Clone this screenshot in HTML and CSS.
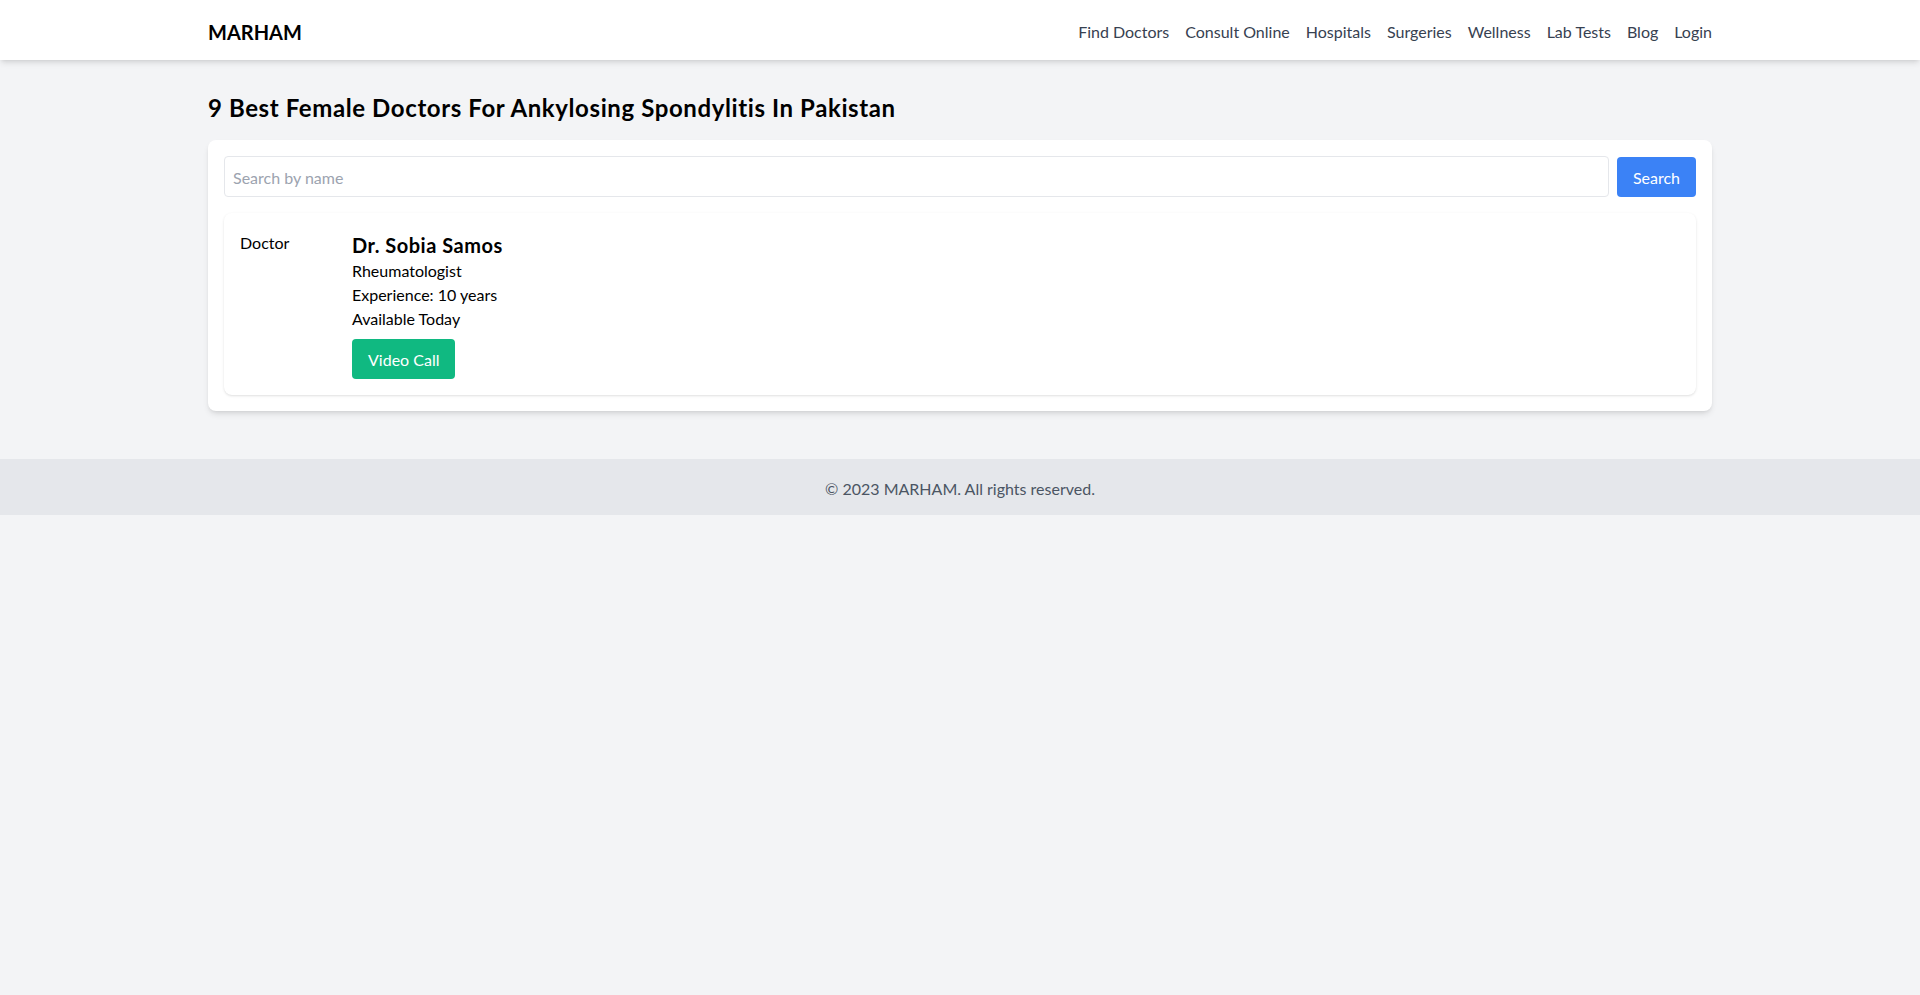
FILE: index.html
```html
<!DOCTYPE html>
<html lang="en">
<head>
<meta charset="utf-8">
<title>MARHAM</title>
<link rel="stylesheet" href="styles.css">
</head>
<body>
<header class="header">
  <div class="container header-inner">
    <a class="logo" href="#">MARHAM</a>
    <nav class="nav">
      <a href="#">Find Doctors</a>
      <a href="#">Consult Online</a>
      <a href="#">Hospitals</a>
      <a href="#">Surgeries</a>
      <a href="#">Wellness</a>
      <a href="#">Lab Tests</a>
      <a href="#">Blog</a>
      <a href="#">Login</a>
    </nav>
  </div>
</header>
<main class="container main">
  <h1 class="title">9 Best Female Doctors For Ankylosing Spondylitis In Pakistan</h1>
  <section class="panel">
    <div class="search-row">
      <input class="search-input" type="text" placeholder="Search by name">
      <button class="search-btn">Search</button>
    </div>
    <div class="doctor-card">
      <div class="doctor-img">Doctor</div>
      <div class="doctor-info">
        <h2 class="doctor-name">Dr. Sobia Samos</h2>
        <p>Rheumatologist</p>
        <p>Experience: 10 years</p>
        <p>Available Today</p>
        <button class="video-btn">Video Call</button>
      </div>
    </div>
  </section>
</main>
<footer class="footer">© 2023 MARHAM. All rights reserved.</footer>
</body>
</html>
```

FILE: styles.css
```css
* { box-sizing: border-box; }
html, body { margin: 0; padding: 0; }
body {
  background: #f3f4f6;
  font-family: Lato, "Noto Sans", sans-serif;
  font-size: 16px;
  line-height: 24px;
  color: #000;
}
a { text-decoration: none; color: inherit; }
p { margin: 0; }
h1, h2 { margin: 0; }
.container {
  max-width: 1536px;
  margin: 0 auto;
  padding: 0 16px;
}
.header {
  background: #fff;
  box-shadow: 0 4px 6px -1px rgba(0,0,0,0.1), 0 2px 4px -2px rgba(0,0,0,0.1);
}
.header-inner {
  height: 60px;
  display: flex;
  align-items: center;
  justify-content: space-between;
  padding-top: 3px;
}
.logo {
  font-size: 20px;
  line-height: 28px;
  font-weight: 700;
}
.nav {
  display: flex;
  gap: 16px;
  color: #374151;
}
.main {
  padding-top: 32px;
  padding-bottom: 48px;
}
.title {
  font-size: 24px;
  line-height: 32px;
  font-weight: 700;
  margin-bottom: 16px;
  letter-spacing: 0.6px;
}
.panel {
  background: #fff;
  border-radius: 8px;
  box-shadow: 0 4px 6px -1px rgba(0,0,0,0.1), 0 2px 4px -2px rgba(0,0,0,0.1);
  padding: 16px;
}
.search-row {
  display: flex;
  gap: 8px;
  margin-bottom: 16px;
}
.search-input {
  flex: 1;
  height: 41px;
  border: 1px solid #e5e7eb;
  border-radius: 4px;
  padding: 2px 8px 0;
  font: inherit;
  color: #000;
  outline: none;
}
.search-input::placeholder { color: #9ca3af; }
.search-btn {
  background: #3b82f6;
  color: #fff;
  border: none;
  border-radius: 4px;
  padding: 2px 16px 0;
  height: 40px;
  margin-top: 1px;
  font: inherit;
}
.doctor-card {
  background: #fff;
  border-radius: 8px;
  box-shadow: 0 1px 3px 0 rgba(0,0,0,0.1), 0 1px 2px -1px rgba(0,0,0,0.1);
  padding: 16px;
  display: flex;
  gap: 16px;
}
.doctor-img {
  width: 96px;
  height: 96px;
  flex-shrink: 0;
  padding-top: 2px;
}
.doctor-info { padding-top: 2px; }
.doctor-name {
  font-size: 20px;
  line-height: 28px;
  font-weight: 700;
  letter-spacing: 0.5px;
}
.video-btn {
  margin-top: 8px;
  background: #10b981;
  color: #fff;
  border: none;
  border-radius: 4px;
  padding: 9px 16px 7px;
  font: inherit;
  line-height: 24px;
}
.footer {
  background: #e5e7eb;
  color: #4b5563;
  text-align: center;
  padding: 18px 0 14px;
}
```
